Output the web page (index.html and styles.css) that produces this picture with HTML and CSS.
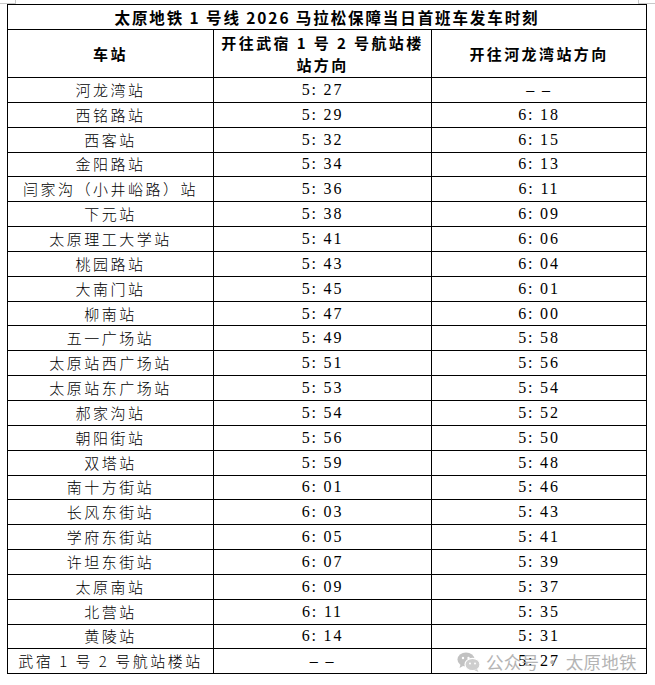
FILE: index.html
```html
<!DOCTYPE html>
<html lang="zh-CN">
<head>
<meta charset="utf-8">
<title>太原地铁1号线2026马拉松保障当日首班车发车时刻</title>
<link rel="stylesheet" href="styles.css">
</head>
<body>
<div class="page">
  <span class="mark mark-tl"></span>
  <span class="mark mark-tr"></span>
  <table class="timetable">
    <colgroup>
      <col class="c1"><col class="c2"><col class="c3">
    </colgroup>
    <thead>
      <tr class="title-row"><th colspan="3">太原地铁 1 号线 2026 马拉松保障当日首班车发车时刻</th></tr>
      <tr class="head-row">
        <th>车站</th>
        <th>开往武宿 1 号 2 号航站楼<br>站方向</th>
        <th>开往河龙湾站方向</th>
      </tr>
    </thead>
    <tbody>
      <tr><td>河龙湾站</td><td class="t">5: 27</td><td class="t">– –</td></tr>
      <tr><td>西铭路站</td><td class="t">5: 29</td><td class="t">6: 18</td></tr>
      <tr><td>西客站</td><td class="t">5: 32</td><td class="t">6: 15</td></tr>
      <tr><td>金阳路站</td><td class="t">5: 34</td><td class="t">6: 13</td></tr>
      <tr><td>闫家沟（小井峪路）站</td><td class="t">5: 36</td><td class="t">6: 11</td></tr>
      <tr><td>下元站</td><td class="t">5: 38</td><td class="t">6: 09</td></tr>
      <tr><td>太原理工大学站</td><td class="t">5: 41</td><td class="t">6: 06</td></tr>
      <tr><td>桃园路站</td><td class="t">5: 43</td><td class="t">6: 04</td></tr>
      <tr><td>大南门站</td><td class="t">5: 45</td><td class="t">6: 01</td></tr>
      <tr><td>柳南站</td><td class="t">5: 47</td><td class="t">6: 00</td></tr>
      <tr><td>五一广场站</td><td class="t">5: 49</td><td class="t">5: 58</td></tr>
      <tr><td>太原站西广场站</td><td class="t">5: 51</td><td class="t">5: 56</td></tr>
      <tr><td>太原站东广场站</td><td class="t">5: 53</td><td class="t">5: 54</td></tr>
      <tr><td>郝家沟站</td><td class="t">5: 54</td><td class="t">5: 52</td></tr>
      <tr><td>朝阳街站</td><td class="t">5: 56</td><td class="t">5: 50</td></tr>
      <tr><td>双塔站</td><td class="t">5: 59</td><td class="t">5: 48</td></tr>
      <tr><td>南十方街站</td><td class="t">6: 01</td><td class="t">5: 46</td></tr>
      <tr><td>长风东街站</td><td class="t">6: 03</td><td class="t">5: 43</td></tr>
      <tr><td>学府东街站</td><td class="t">6: 05</td><td class="t">5: 41</td></tr>
      <tr><td>许坦东街站</td><td class="t">6: 07</td><td class="t">5: 39</td></tr>
      <tr><td>太原南站</td><td class="t">6: 09</td><td class="t">5: 37</td></tr>
      <tr><td>北营站</td><td class="t">6: 11</td><td class="t">5: 35</td></tr>
      <tr><td>黄陵站</td><td class="t">6: 14</td><td class="t">5: 31</td></tr>
      <tr><td>武宿 1 号 2 号航站楼站</td><td class="t">– –</td><td class="t">5: 27</td></tr>
    </tbody>
  </table>
  <div class="watermark">
    <svg class="wm-icon" viewBox="0 0 24 22" width="24" height="22" aria-hidden="true">
      <ellipse cx="9" cy="8.5" rx="8.5" ry="7" fill="#b8b8b8"/>
      <path d="M3.5 13.5 L2.5 17 L6.5 14.8 Z" fill="#b8b8b8"/>
      <ellipse cx="15.5" cy="13.5" rx="7.5" ry="6.2" fill="#c6c6c6" stroke="#fff" stroke-width="1.2"/>
      <path d="M20 18 L21.5 21 L17.5 19.3 Z" fill="#c6c6c6"/>
      <circle cx="6" cy="7" r="1.2" fill="#fff"/>
      <circle cx="11.5" cy="7" r="1.2" fill="#fff"/>
      <circle cx="13" cy="12.5" r="1" fill="#fff"/>
      <circle cx="18" cy="12.5" r="1" fill="#fff"/>
    </svg>
    <span class="wm-text">公众号 · 太原地铁</span>
  </div>
</div>
</body>
</html>
```

FILE: styles.css
```css
html, body {
  margin: 0;
  padding: 0;
  background: #ffffff;
}

.page {
  position: relative;
  width: 655px;
  height: 685px;
  padding-top: 4px;
  padding-left: 7px;
  box-sizing: border-box;
  font-family: "Noto Sans CJK SC", "Noto Sans", sans-serif;
  color: #000;
}

.mark {
  position: absolute;
  border-color: #c8c8c8;
  border-style: solid;
  width: 15px;
  height: 3px;
}
.mark-tl {
  left: 0;
  top: 0;
  border-width: 0 1px 1px 0;
}
.mark-tr {
  left: 638px;
  top: 0;
  border-width: 0 0 1px 1px;
  width: 17px;
}

.timetable {
  border-collapse: collapse;
  table-layout: fixed;
  width: 639px;
}

.c1 { width: 206px; }
.c2 { width: 218px; }
.c3 { width: 215px; }

.timetable th,
.timetable td {
  border: 1px solid #000;
  padding: 0;
  text-align: center;
  vertical-align: middle;
  overflow: hidden;
  white-space: nowrap;
}

.title-row th {
  height: 24px;
  font-size: 15.5px;
  font-weight: 700;
  letter-spacing: 1.9px;
  line-height: 20px;
}

.head-row th {
  height: 47px;
  font-size: 15px;
  font-weight: 700;
  letter-spacing: 2.4px;
  line-height: 22px;
}

.timetable td {
  height: 23.85px;
  font-size: 15px;
  font-weight: 300;
  letter-spacing: 2.5px;
  line-height: 20px;
}

.timetable td.t {
  font-family: "Liberation Serif", "DejaVu Serif", serif;
  font-size: 16px;
  letter-spacing: 1.8px;
}

.watermark {
  position: absolute;
  left: 457px;
  top: 649px;
  display: flex;
  align-items: center;
  gap: 5px;
  opacity: 0.85;
  pointer-events: none;
}

.wm-text {
  font-family: "Noto Sans CJK SC", "Noto Sans", sans-serif;
  font-size: 17.5px;
  color: #a8a8a8;
  letter-spacing: 0.3px;
  white-space: nowrap;
}
```
